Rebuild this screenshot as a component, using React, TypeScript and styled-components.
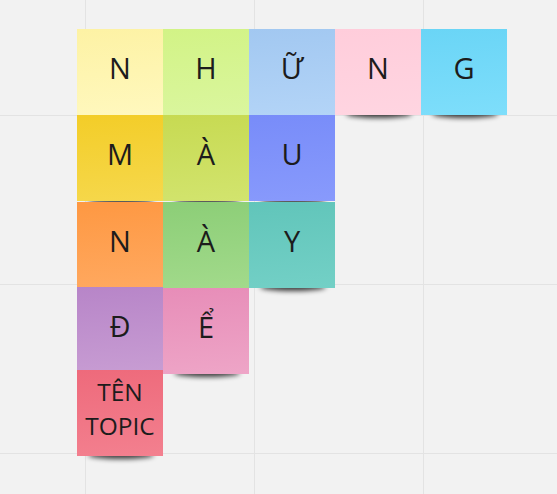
import React from "react";
import styled, { createGlobalStyle } from "styled-components";

const Global = createGlobalStyle`
  html, body { margin: 0; padding: 0; background: #f2f2f2; }
  #root { width: 557px; height: 494px; overflow: hidden; }
`;

const Board = styled.div`
  position: relative;
  z-index: 0;
  width: 557px;
  height: 494px;
  background-color: #f2f2f2;
  background-image:
    linear-gradient(to right, #e3e3e3 1px, transparent 1px),
    linear-gradient(to bottom, #e3e3e3 1px, transparent 1px);
  background-size: 169px 169px;
  background-position: 85px 115px;
  font-family: "Open Sans", "Noto Sans", sans-serif;
`;

const Sticky = styled.div<{ $x: number; $y: number; $top: string; $bottom: string }>`
  position: absolute;
  left: ${(p) => p.$x}px;
  top: ${(p) => p.$y}px;
  width: 86px;
  height: 86px;
  box-sizing: border-box;
  padding-bottom: 9px;
  display: flex;
  align-items: center;
  justify-content: center;
  text-align: center;
  background: linear-gradient(175deg, ${(p) => p.$top} 0%, ${(p) => p.$bottom} 100%);
  color: #1c1c1c;
  font-weight: 400;
  line-height: 1;

  &::after {
    content: "";
    position: absolute;
    left: 11px;
    right: 9px;
    bottom: -3px;
    height: 8px;
    background: rgba(0, 0, 0, 0.75);
    filter: blur(2.5px);
    border-radius: 50%;
    z-index: -1;
  }
`;

const Label = styled.span<{ $small?: boolean }>`
  font-size: ${(p) => (p.$small ? "24.5px" : "29px")};
  line-height: ${(p) => (p.$small ? "34px" : "1")};
`;

type Note = { text: string[]; x: number; y: number; top: string; bottom: string };

const notes: Note[] = [
  { text: ["N"], x: 77, y: 29, top: "#fdf2a4", bottom: "#fff8be" },
  { text: ["H"], x: 163, y: 29, top: "#d2f386", bottom: "#daf69e" },
  { text: ["Ữ"], x: 249, y: 29, top: "#a2c8f1", bottom: "#b3d4f7" },
  { text: ["N"], x: 335, y: 29, top: "#ffcddb", bottom: "#ffd5e1" },
  { text: ["G"], x: 421, y: 29, top: "#6ad5f6", bottom: "#7edefb" },
  { text: ["M"], x: 77, y: 115, top: "#f3cd28", bottom: "#f6d84c" },
  { text: ["À"], x: 163, y: 115, top: "#c7da52", bottom: "#d2e46e" },
  { text: ["U"], x: 249, y: 115, top: "#788cf9", bottom: "#889afc" },
  { text: ["N"], x: 77, y: 202, top: "#fe9842", bottom: "#ffa960" },
  { text: ["À"], x: 163, y: 202, top: "#8cce77", bottom: "#a2da8b" },
  { text: ["Y"], x: 249, y: 202, top: "#61c5ba", bottom: "#73d0c6" },
  { text: ["Đ"], x: 77, y: 287, top: "#b785c8", bottom: "#c89dd3" },
  { text: ["Ể"], x: 163, y: 288, top: "#e78db8", bottom: "#eea5c7" },
  { text: ["TÊN", "TOPIC"], x: 77, y: 370, top: "#ee6a7b", bottom: "#f3808f" },
];

export default function App() {
  return (
    <>
      <Global />
      <Board>
        {notes.map((n, i) => (
          <Sticky key={i} $x={n.x} $y={n.y} $top={n.top} $bottom={n.bottom}>
            <Label $small={n.text.length > 1}>
              {n.text.map((t, j) => (
                <React.Fragment key={j}>
                  {j > 0 && <br />}
                  {t}
                </React.Fragment>
              ))}
            </Label>
          </Sticky>
        ))}
      </Board>
    </>
  );
}
